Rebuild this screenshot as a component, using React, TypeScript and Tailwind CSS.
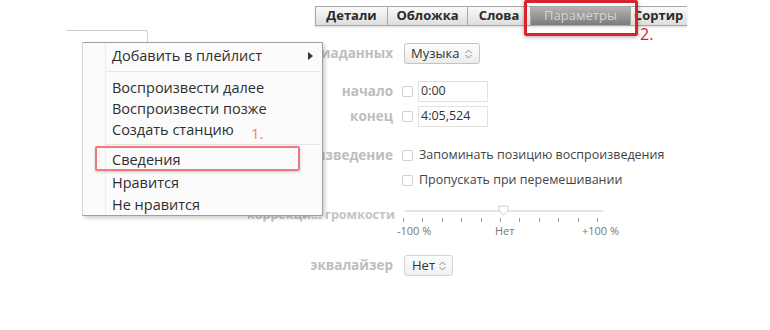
import React from "react";

const Tab = ({ label, w, active }: { label: string; w: string; active?: boolean }) => (
  <div
    className={
      "h-[20px] flex items-center justify-center border-y border-r border-[#a8a8a8] text-[13px] font-bold overflow-hidden whitespace-nowrap " +
      w +
      (active
        ? " bg-gradient-to-b from-[#b4b4b4] to-[#7c7c7c] text-[#d4d4d4] font-normal"
        : " bg-gradient-to-b from-[#fafafa] to-[#dedede] text-[#2a2a2a]")
    }
  >
    {label}
  </div>
);

const Label = ({ children }: { children: React.ReactNode }) => (
  <div className="w-[155px] pr-[9px] text-right text-[13.5px] font-bold text-[#bdbdbd] whitespace-nowrap">{children}</div>
);

const Check = () => <div className="w-[11px] h-[11px] border border-[#cfcfcf] rounded-[2px] bg-white shrink-0" />;

const UpDown = () => (
  <svg width="9" height="12" viewBox="0 0 9 12" className="ml-auto shrink-0">
    <path d="M1.5 5 L4.5 2 L7.5 5" fill="none" stroke="#888" strokeWidth="1" />
    <path d="M1.5 7 L4.5 10 L7.5 7" fill="none" stroke="#888" strokeWidth="1" />
  </svg>
);

export default function App() {
  const ticks = Array.from({ length: 11 }, (_, i) => i);
  return (
    <div className="relative w-[770px] h-[330px] overflow-hidden bg-white text-[#222]" style={{ fontFamily: '"Open Sans", "Noto Sans", sans-serif' }}>
      {/* tabs */}
      <div className="flex pl-[315px] pt-[6px]">
        <div className="flex shadow-[0_1px_2px_rgba(0,0,0,0.15)] border-l border-[#a8a8a8]">
          <Tab label="Детали" w="w-[72px]" />
          <Tab label="Обложка" w="w-[80px]" />
          <Tab label="Слова" w="w-[63px]" />
          <Tab label="Параметры" w="w-[100px]" active />
          <div className="h-[20px] w-[56px] flex items-center pl-[3px] border-y border-[#a8a8a8] bg-gradient-to-b from-[#fafafa] to-[#dedede] text-[13px] font-bold text-[#2a2a2a] overflow-hidden whitespace-nowrap">
            Сортир
          </div>
        </div>
      </div>

      {/* settings */}
      <div className="pl-[247px] mt-[17px] flex flex-col">
        <div className="flex items-center h-[21px]">
          <Label>вид медиаданных</Label>
          <div className="ml-[2px] h-[21px] w-[76px] flex items-center pl-[6px] pr-[6px] border border-[#c4c4c4] rounded-[3px] bg-gradient-to-b from-[#fdfdfd] to-[#ececec] text-[13px] text-[#333]">
            Музыка
            <UpDown />
          </div>
        </div>

        <div className="flex items-center h-[21px] mt-[17px]">
          <Label>начало</Label>
          <Check />
          <div className="ml-[5px] h-[21px] w-[70px] border border-[#e2e2e2] flex items-center pl-[2px] text-[12.5px] text-[#333]">0:00</div>
        </div>
        <div className="flex items-center h-[21px] mt-[4px]">
          <Label>конец</Label>
          <Check />
          <div className="ml-[5px] h-[21px] w-[70px] border border-[#e2e2e2] flex items-center pl-[2px] text-[12.5px] text-[#333]">4:05,524</div>
        </div>

        <div className="flex items-center h-[20px] mt-[18px]">
          <Label>воспроизведение</Label>
          <Check />
          <div className="ml-[6px] text-[12.5px] text-[#444] whitespace-nowrap">Запоминать позицию воспроизведения</div>
        </div>
        <div className="flex items-center h-[20px] mt-[5px]">
          <div className="w-[155px]" />
          <Check />
          <div className="ml-[6px] text-[12.5px] text-[#444] whitespace-nowrap">Пропускать при перемешивании</div>
        </div>

        <div className="flex mt-[15px]">
          <div className="w-[155px] pt-[1px] text-right pr-[9px] text-[12.5px] font-bold text-[#c4c4c4] whitespace-nowrap">коррекци... громкости</div>
          <div className="w-[215px] flex flex-col">
            <div className="relative ml-[3px] w-[198px] h-[12px] flex items-center">
              <div className="w-full h-[2px] bg-[#e3e3e3]" />
              <svg className="absolute left-[93px] top-[0px]" width="11" height="11" viewBox="0 0 11 11">
                <path d="M1 1 H10 V6 L5.5 10 L1 6 Z" fill="#fff" stroke="#cfcfcf" strokeWidth="1" />
              </svg>
            </div>
            <div className="ml-[1px] w-[195px] flex justify-between h-[5px] mt-[1px]">
              {ticks.map((t) => (
                <div key={t} className="w-px h-[4px] bg-[#999]" />
              ))}
            </div>
            <div className="relative h-[15px] text-[11px] text-[#777] whitespace-nowrap">
              <span className="absolute left-[-5px] top-[0px]">-100 %</span>
              <span className="absolute left-[93px] top-[0px]">Нет</span>
              <span className="absolute left-[180px] top-[0px]">+100 %</span>
            </div>
          </div>
        </div>

        <div className="flex items-center h-[21px] mt-[17px]">
          <Label>эквалайзер</Label>
          <div className="ml-[2px] h-[21px] w-[49px] flex items-center pl-[7px] pr-[5px] border border-[#d4d4d4] rounded-[3px] bg-gradient-to-b from-[#fdfdfd] to-[#f0f0f0] text-[13px] text-[#333]">
            Нет
            <UpDown />
          </div>
        </div>
      </div>

      {/* field behind menu */}
      <div className="absolute left-[66px] top-[30px] w-[82px] h-[20px] border-t border-r border-[#cfcfcf] rounded-tr-[3px] bg-white" />

      {/* context menu */}
      <div className="absolute left-[82px] top-[42px] w-[241px] h-[174px] bg-[#fbfbfb] border border-[#a0a0a0] border-l-[#d8d8d8] shadow-[2px_2px_4px_rgba(0,0,0,0.2)] text-[14.5px] text-[#2e2e2e]">
        <div className="absolute left-[22px] top-0 bottom-0 w-px bg-[#ececec]" />
        <div className="flex items-center h-[25px] pl-[29px] pr-[9px]">
          Добавить в плейлист
          <svg className="ml-auto" width="5" height="8" viewBox="0 0 5 8">
            <path d="M0 0 L5 4 L0 8 Z" fill="#333" />
          </svg>
        </div>
        <div className="ml-[23px] mr-[2px] mt-[3px] mb-[3px] h-px bg-[#e6e6e6]" />
        <div className="flex items-center h-[21px] pl-[29px] mt-[5px]">Воспроизвести далее</div>
        <div className="flex items-center h-[21px] pl-[29px]">Воспроизвести позже</div>
        <div className="flex items-center h-[22px] pl-[29px]">Создать станцию</div>
        <div className="ml-[23px] mr-[2px] my-[3px] h-px bg-[#e6e6e6]" />
        <div className="flex items-center h-[23px] pl-[29px]">Сведения</div>
        <div className="flex items-center h-[23px] pl-[29px]">Нравится</div>
        <div className="flex items-center h-[22px] pl-[29px]">Не нравится</div>
      </div>

      {/* annotations */}
      <div className="absolute left-[95px] top-[146px] w-[205px] h-[25px] border-2 border-[#ee7a80] rounded-[2px] shadow-[0_1px_3px_rgba(0,0,0,0.2)]" />
      <div className="absolute left-[251px] top-[122px] text-[15px] text-[#ee7a80]">1.</div>

      <div className="absolute left-[524px] top-[0px] w-[114px] h-[36px] border-[3px] border-[#d7232d] rounded-[2px] shadow-[0_1px_4px_rgba(0,0,0,0.35)]" />
      <div className="absolute left-[640px] top-[22px] text-[16px] text-[#d7232d]">2.</div>
    </div>
  );
}
